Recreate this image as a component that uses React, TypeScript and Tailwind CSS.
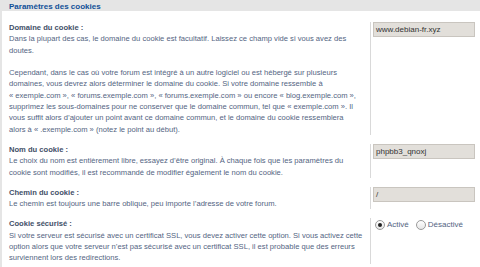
const ROWS = [
    {
        label: 'Domaine du cookie :',
        lines: [
            'Dans la plupart des cas, le domaine du cookie est facultatif. Laissez ce champ vide si vous avez des',
            'doutes.',
            '',
            'Cependant, dans le cas où votre forum est intégré à un autre logiciel ou est hébergé sur plusieurs',
            'domaines, vous devrez alors déterminer le domaine du cookie. Si votre domaine ressemble à',
            '« exemple.com », « forums.exemple.com », « forums.exemple.com » ou encore « blog.exemple.com »,',
            'supprimez les sous-domaines pour ne conserver que le domaine commun, tel que « exemple.com ». Il',
            'vous suffit alors d’ajouter un point avant ce domaine commun, et le domaine du cookie ressemblera',
            'alors à « .exemple.com » (notez le point au début).'
        ],
        value: 'www.debian-fr.xyz'
    },
    {
        label: 'Nom du cookie :',
        lines: [
            'Le choix du nom est entièrement libre, essayez d’être original. À chaque fois que les paramètres du',
            'cookie sont modifiés, il est recommandé de modifier également le nom du cookie.'
        ],
        value: 'phpbb3_qnoxj'
    },
    {
        label: 'Chemin du cookie :',
        lines: ['Le chemin est toujours une barre oblique, peu importe l’adresse de votre forum.'],
        value: '/'
    },
    {
        label: 'Cookie sécurisé :',
        lines: [
            'Si votre serveur est sécurisé avec un certificat SSL, vous devez activer cette option. Si vous activez cette',
            'option alors que votre serveur n’est pas sécurisé avec un certificat SSL, il est probable que des erreurs',
            'surviennent lors des redirections.'
        ],
        value: null
    }
];

function Radio({ checked, label }: { checked?: boolean; label: string }) {
    return (
        <label className="flex items-center gap-[2px]">
            <span className="w-[10px] h-[10px] rounded-full border border-[#9a9a9a] bg-gradient-to-b from-white to-[#e6e6e6] flex items-center justify-center">
                {checked && <span className="w-[4px] h-[4px] rounded-full bg-[#222]" />}
            </span>
            <span className="text-[#536482]">{label}</span>
        </label>
    );
}

export default function App() {
    return (
        <div className="w-[480px] h-[267px] overflow-hidden bg-[#e5e5e5] text-[7.6px] leading-[11.3px] font-['Liberation_Sans',Arial,sans-serif]">
            <div className="relative h-[10px]">
                <span className="absolute left-[9px] top-[1px] font-bold text-[#115098] text-[8px] leading-[11px]">
                    Paramètres des cookies
                </span>
            </div>
            <div className="ml-[2px] bg-white h-full pt-[11px] pb-2 space-y-[9px] border-t border-[#e5e5e5]">
                {ROWS.map((row) => (
                    <div key={row.label} className="flex">
                        <div className="w-[368px] pl-[7px]">
                            <div className="font-bold text-[#425067]">{row.label}</div>
                            <div className="text-[#536482] whitespace-nowrap">
                                {row.lines.map((l, i) => (
                                    <div key={i} className="h-[11.3px]">{l}</div>
                                ))}
                            </div>
                        </div>
                        <div className="flex-1 border-l border-[#d9d9d9] pl-[2px] pr-[4px]">
                            {row.value !== null ? (
                                <div className="h-[15px] w-[102px] bg-[#e2dfda] border border-[#c9c5bf] pl-[2px] text-[#333] flex items-center text-[8px]">
                                    {row.value}
                                </div>
                            ) : (
                                <div className="flex items-center gap-[7px] pl-[2px] pt-[1px] text-[8px]">
                                    <Radio checked label="Activé" />
                                    <Radio label="Désactivé" />
                                </div>
                            )}
                        </div>
                    </div>
                ))}
            </div>
        </div>
    );
}
